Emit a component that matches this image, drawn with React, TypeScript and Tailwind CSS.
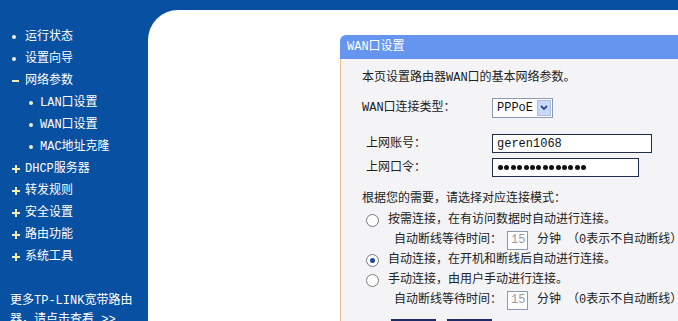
import React from 'react';

const font = { fontFamily: '"Liberation Mono", "Noto Sans CJK SC", monospace' };

type Mark = 'dot' | 'minus' | 'plus';

const Bullet: React.FC<{ mark: Mark }> = ({ mark }) => {
  if (mark === 'dot') return <span className="block w-[4px] h-[4px] rounded-full bg-[#eef2d0]" />;
  if (mark === 'minus') return <span className="block w-[7px] h-[2px] bg-[#f2eeb0]" />;
  return (
    <svg width="8" height="8" viewBox="0 0 8 8">
      <path d="M3 0h2v3h3v2H5v3H3V5H0V3h3z" fill="#f2eeb0" />
    </svg>
  );
};

const NavItem: React.FC<{ label: string; mark: Mark; sub?: boolean }> = ({ label, mark, sub }) => (
  <div className={`flex items-center h-[22px] whitespace-nowrap ${sub ? 'pl-[29px]' : 'pl-[12px]'}`}>
    <span className={`flex items-center ${sub ? 'w-[11px]' : 'w-[13px]'}`}>
      <Bullet mark={mark} />
    </span>
    <span className="text-white">{label}</span>
  </div>
);

const Radio: React.FC<{ checked?: boolean }> = ({ checked }) => (
  <span className="shrink-0 flex items-center justify-center w-[13px] h-[13px] rounded-full border border-[#7a7a7a] bg-white">
    {checked && <span className="w-[5px] h-[5px] rounded-full bg-[#21479a]" />}
  </span>
);

const WaitRow = () => (
  <div className="flex items-center h-[20px] pl-[32px] text-[#222] whitespace-nowrap">
    <span className="shrink-0">自动断线等待时间：</span>
    <span className="shrink-0 ml-[5px] flex items-center w-[21px] h-[19px] border border-[#8a9ab0] bg-white pl-[3px] text-[#9a9a9a]">15</span>
    <span className="shrink-0 ml-[9px]">分钟</span>
    <span className="shrink-0 ml-[6px]">（0表示不自动断线）</span>
  </div>
);

export default function App() {
  return (
    <div className="w-[678px] h-[321px] overflow-hidden bg-[#0850a2] flex text-[12px] leading-none" style={font}>
      <div className="w-[148px] shrink-0 pt-[26px]">
        <NavItem label="运行状态" mark="dot" />
        <NavItem label="设置向导" mark="dot" />
        <NavItem label="网络参数" mark="minus" />
        <NavItem label="LAN口设置" mark="dot" sub />
        <NavItem label="WAN口设置" mark="dot" sub />
        <NavItem label="MAC地址克隆" mark="dot" sub />
        <NavItem label="DHCP服务器" mark="plus" />
        <NavItem label="转发规则" mark="plus" />
        <NavItem label="安全设置" mark="plus" />
        <NavItem label="路由功能" mark="plus" />
        <NavItem label="系统工具" mark="plus" />
        <div className="mt-[24px] pl-[10px] text-white leading-[19px] whitespace-nowrap">
          更多TP-LINK宽带路由<br />器，请点击查看 &gt;&gt;
        </div>
      </div>

      <div className="flex-1 min-w-0 overflow-hidden mt-[10px] bg-white rounded-tl-[30px] pl-[192px] pt-[25px]">
        <div className="w-[420px] h-full flex flex-col whitespace-nowrap">
          <div className="h-[24px] shrink-0 flex items-center bg-[#6595ee] rounded-tl-[6px] pl-[7px] text-white">
            WAN口设置
          </div>
          <div className="flex-1 bg-[#f4f4f6] border-l border-[#e6c68c] pl-[21px] text-[#222]">
            <div className="mt-[9px] h-[20px] flex items-center">本页设置路由器WAN口的基本网络参数。</div>

            <div className="mt-[9px] h-[22px] flex items-center">
              <span className="w-[130px] shrink-0">WAN口连接类型：</span>
              <div className="flex items-center justify-between w-[61px] h-[20px] border border-[#8c9bb5] bg-white pl-[4px] pr-[1px]">
                <span className="text-[#111]">PPPoE</span>
                <span className="flex items-center justify-center w-[14px] h-[16px] bg-[#c8d8fa] border border-[#aabde6]">
                  <svg width="8" height="6" viewBox="0 0 8 6">
                    <path d="M1 1l3 3 3-3" stroke="#2c4a8c" strokeWidth="1.8" fill="none" />
                  </svg>
                </span>
              </div>
            </div>

            <div className="mt-[15px] h-[19px] flex items-center">
              <span className="w-[130px] shrink-0 pl-[4px]">上网账号：</span>
              <div className="flex items-center w-[160px] h-[19px] border border-[#1f2e4a] bg-white pl-[4px] text-[#111]">geren1068</div>
            </div>
            <div className="mt-[5px] h-[19px] flex items-center">
              <span className="w-[130px] shrink-0 pl-[4px]">上网口令：</span>
              <div className="flex items-center gap-[1.4px] w-[147px] h-[19px] border border-[#1f2e4a] bg-white pl-[5px]">
                {Array.from({ length: 14 }).map((_, i) => (
                  <span key={i} className="w-[5px] h-[5px] rounded-full bg-[#111]" />
                ))}
              </div>
            </div>

            <div className="mt-[12px] h-[20px] flex items-center">根据您的需要，请选择对应连接模式：</div>

            <div className="mt-[1px] h-[20px] flex items-center pl-[4px]">
              <Radio />
              <span className="ml-[9px]">按需连接，在有访问数据时自动进行连接。</span>
            </div>
            <WaitRow />
            <div className="h-[20px] flex items-center pl-[4px]">
              <Radio checked />
              <span className="ml-[9px]">自动连接，在开机和断线后自动进行连接。</span>
            </div>
            <div className="h-[20px] flex items-center pl-[4px]">
              <Radio />
              <span className="ml-[9px]">手动连接，由用户手动进行连接。</span>
            </div>
            <WaitRow />

            <div className="mt-[9px] flex gap-[11px] pl-[29px]">
              <button className="w-[45px] h-[20px] border-2 border-[#1c2a66] bg-[#dce6fb] text-[#111]">保 存</button>
              <button className="w-[45px] h-[20px] border-2 border-[#1c2a66] bg-[#dce6fb] text-[#111]">帮 助</button>
            </div>
          </div>
        </div>
      </div>
    </div>
  );
}
